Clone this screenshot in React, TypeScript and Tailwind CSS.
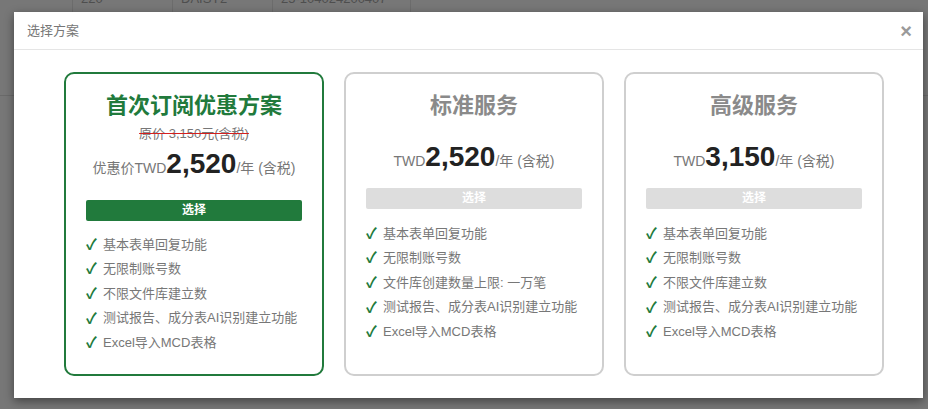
import React from 'react';

type Plan = {
  title: string;
  original?: string;
  prefix: string;
  amount: string;
  features: string[];
  active: boolean;
};

const plans: Plan[] = [
  {
    title: '首次订阅优惠方案',
    original: '原价 3,150元(含税)',
    prefix: '优惠价TWD',
    amount: '2,520',
    features: ['基本表单回复功能', '无限制账号数', '不限文件库建立数', '测试报告、成分表AI识别建立功能', 'Excel导入MCD表格'],
    active: true,
  },
  {
    title: '标准服务',
    prefix: 'TWD',
    amount: '2,520',
    features: ['基本表单回复功能', '无限制账号数', '文件库创建数量上限: 一万笔', '测试报告、成分表AI识别建立功能', 'Excel导入MCD表格'],
    active: false,
  },
  {
    title: '高级服务',
    prefix: 'TWD',
    amount: '3,150',
    features: ['基本表单回复功能', '无限制账号数', '不限文件库建立数', '测试报告、成分表AI识别建立功能', 'Excel导入MCD表格'],
    active: false,
  },
];

const PlanCard: React.FC<{ plan: Plan }> = ({ plan }) => {
  const { active } = plan;
  return (
    <div
      className={`w-[260px] rounded-[10px] border-2 px-[20px] pt-[17px] pb-[19px] flex flex-col ${
        active ? 'border-[#217a3c]' : 'border-[#cfcfcf]'
      }`}
    >
      <h2
        className={`text-center text-[22px] leading-[30px] font-bold ${active ? 'text-[#217a3c]' : 'text-[#8a8a8a]'}`}
      >
        {plan.title}
      </h2>
      {plan.original && (
        <div className="mt-[4px] text-center text-[13px] leading-[18px] text-[#777] line-through decoration-[#d41f1f]">
          {plan.original}
        </div>
      )}
      <div
        className={`text-center text-[14px] leading-[34px] text-[#777] whitespace-nowrap ${
          active ? 'mt-[4px]' : 'mt-[19px]'
        }`}
      >
        {plan.prefix}
        <span className="text-[28px] font-bold text-[#222]">{plan.amount}</span>/年 (含税)
      </div>
      <button
        className={`h-[21px] rounded-[2px] text-[12px] font-bold text-white leading-[21px] ${
          active ? 'mt-[15px] bg-[#217a3c]' : 'mt-[10px] bg-[#dddddd]'
        }`}
      >
        选择
      </button>
      <ul className={active ? 'mt-[11px]' : 'mt-[12px]'}>
        {plan.features.map((f) => (
          <li key={f} className="flex items-center h-[24.6px] text-[13px] text-[#777] whitespace-nowrap">
            <span className="w-[15px] text-[15px] font-bold text-[#217a3c] leading-none">✓</span>
            <span className="ml-[2px]">{f}</span>
          </li>
        ))}
      </ul>
    </div>
  );
};

export default function App() {
  return (
    <div
      className="relative w-[928px] h-[409px] overflow-hidden bg-[#777]"
      style={{ fontFamily: '"Liberation Sans", "Noto Sans CJK SC", sans-serif' }}
    >
      {/* table behind the overlay, scrolled up */}
      <div className="-mt-[14px] text-[13px] text-[#4e4e4e]">
        <div className="flex h-[26px] items-center">
          <div className="w-[72px]" />
          <div className="w-[100px] h-full border-l border-[#6c6c6c] pl-[8px] leading-[26px]">220</div>
          <div className="w-[100px] h-full border-l border-[#6c6c6c] pl-[8px] leading-[26px]">DAISY2</div>
          <div className="w-[138px] h-full border-l border-[#6c6c6c] pl-[8px] leading-[26px]">25-104024200407</div>
          <div className="flex-1 h-full border-l border-[#6c6c6c]" />
        </div>
        <div className="h-[84px] border-b border-[#6a6a6a]" />
      </div>

      {/* modal */}
      <div className="absolute left-[14px] top-[12px] w-[909px] h-[386px] bg-white shadow-[0_3px_9px_rgba(0,0,0,0.45)]">
        <div className="flex items-center justify-between h-[38px] border-b border-[#e5e5e5] pl-[13px] pr-[11px]">
          <span className="text-[13px] text-[#777]">选择方案</span>
          <span className="text-[20px] font-bold leading-none text-[#9a9a9a]">×</span>
        </div>
        <div className="flex gap-[20px] pl-[50px] pt-[22px]">
          {plans.map((p) => (
            <PlanCard key={p.title} plan={p} />
          ))}
        </div>
      </div>
    </div>
  );
}
